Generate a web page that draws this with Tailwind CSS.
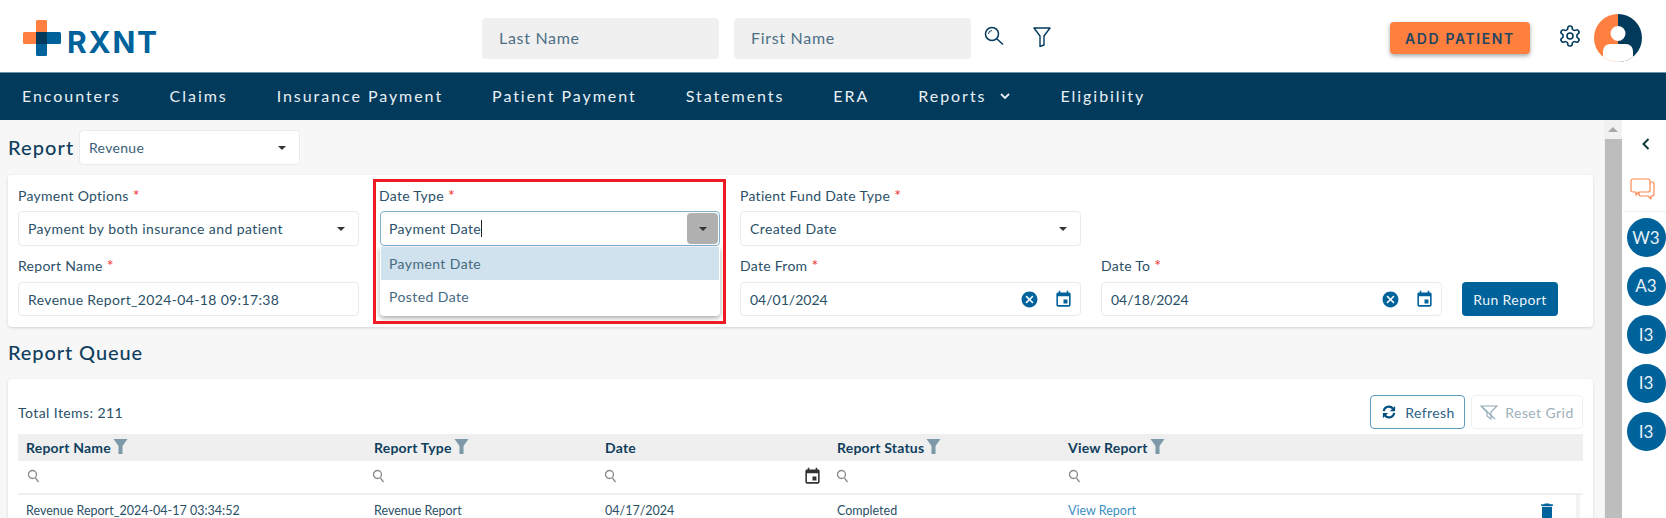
<!DOCTYPE html>
<html lang="en">
<head>
<meta charset="utf-8">
<title>RXNT Report</title>
<script src="https://cdn.jsdelivr.net/npm/@tailwindcss/browser@4"></script>
</head>
<body class="font-['Lato',sans-serif] text-[#2a5068] bg-white">
<div class="w-[1666px] h-[518px] overflow-hidden flex flex-col">
  <!-- header -->
  <header class="h-[72px] shrink-0 flex items-center bg-white relative">
    <div class="w-[482px] shrink-0 pl-[23px] flex items-center">
      <svg width="38" height="36" viewBox="0 0 38 36" class="mt-[3px]">
        <path d="M13 1.5a1.5 1.5 0 0 1 1.5-1.5h8a1.5 1.5 0 0 1 1.5 1.5V12H13v12H1.500a1.500 1.500 0 0 1-1.500-1.500v-9A1.500 1.500 0 0 1 1.500 12H13z" fill="#ff7f40"/>
        <path d="M13 12h23.500a1.500 1.500 0 0 1 1.500 1.500v9a1.500 1.500 0 0 1-1.500 1.500H24v10.500a1.500 1.500 0 0 1-1.500 1.500h-8a1.500 1.500 0 0 1-1.500-1.500z" fill="#00629b"/>
        <rect x="13" y="12" width="11" height="12" fill="#023a5c"/>
      </svg>
      <span class="ml-[6px] mt-[12px] text-[30px] leading-[30px] font-bold tracking-[1.8px] text-[#00629b] font-['Inter',sans-serif]">RXNT</span>
    </div>
    <div class="mt-[4px] w-[237px] h-[41px] rounded bg-[#f0f0f0] flex items-center pl-[17px] text-[16px] tracking-[0.7px] text-[#4d6f86]">Last Name</div>
    <div class="mt-[4px] w-[237px] h-[41px] rounded bg-[#f0f0f0] flex items-center pl-[17px] ml-[15px] text-[16px] tracking-[0.7px] text-[#4d6f86]">First Name</div>
    <svg class="ml-[13px]" width="20" height="20" viewBox="0 0 20 20" fill="none" stroke="#023a5c" stroke-width="1.500"><circle cx="8" cy="8" r="6.500"/><path d="M13 13l6 5.500"/><path d="M4.500 8a3.500 3.500 0 0 1 3.500-3.500" stroke-width="1"/></svg>
    <svg class="ml-[29px] mt-[2px]" width="18" height="20" viewBox="0 0 18 20" fill="none" stroke="#023a5c" stroke-width="1.400" stroke-linejoin="round"><path d="M1 1h16l-6 8v9l-4 1.500V9z"/></svg>
    <div class="mt-[4px] ml-[339px] w-[140px] h-[32px] rounded bg-[#ff7f3f] shadow-[0_2px_4px_rgba(0,0,0,0.35)] flex items-center justify-center text-[14px] font-semibold tracking-[1.6px] text-[#1e4562] font-['Inter',sans-serif]">ADD PATIENT</div>
    <svg class="ml-[28px]" width="24" height="24" viewBox="0 0 24 24" fill="none" stroke="#023a5c" stroke-width="1.600" stroke-linecap="round" stroke-linejoin="round"><path d="M12.220 2h-.44a2 2 0 0 0-2 2v.18a2 2 0 0 1-1 1.730l-.43.25a2 2 0 0 1-2 0l-.15-.08a2 2 0 0 0-2.730.73l-.22.38a2 2 0 0 0 .73 2.730l.15.1a2 2 0 0 1 1 1.720v.51a2 2 0 0 1-1 1.740l-.15.09a2 2 0 0 0-.73 2.730l.22.38a2 2 0 0 0 2.730.73l.15-.08a2 2 0 0 1 2 0l.43.25a2 2 0 0 1 1 1.730V20a2 2 0 0 0 2 2h.44a2 2 0 0 0 2-2v-.18a2 2 0 0 1 1-1.730l.43-.25a2 2 0 0 1 2 0l.15.08a2 2 0 0 0 2.730-.73l.22-.39a2 2 0 0 0-.73-2.730l-.15-.08a2 2 0 0 1-1-1.740v-.5a2 2 0 0 1 1-1.740l.15-.09a2 2 0 0 0 .73-2.730l-.22-.38a2 2 0 0 0-2.730-.73l-.15.08a2 2 0 0 1-2 0l-.43-.25a2 2 0 0 1-1-1.730V4a2 2 0 0 0-2-2z"/><circle cx="12" cy="12" r="3"/></svg>
    <svg class="mt-[4px] ml-[12px]" width="48" height="48" viewBox="0 0 48 48">
      <defs><clipPath id="av"><circle cx="24" cy="24" r="24"/></clipPath></defs>
      <g clip-path="url(#av)">
        <rect width="24" height="48" fill="#ff7f40"/><rect x="24" width="24" height="48" fill="#023a5c"/>
        <circle cx="24" cy="19.500" r="7.500" fill="#fff"/>
        <path d="M9 48V37a7 7 0 0 1 7-7h16a7 7 0 0 1 7 7v11z" fill="#fff"/>
      </g>
    </svg>
  </header>
  <!-- nav -->
  <nav class="h-[48px] pb-[2px] shrink-0 bg-[#023a5c] border-t border-[#6f93a8] flex items-center pl-[22px] gap-x-[49px] text-[16px] tracking-[1.95px] text-[#e9f0f4]">
    <span>Encounters</span><span>Claims</span><span>Insurance Payment</span><span>Patient Payment</span><span>Statements</span><span>ERA</span>
    <span class="flex items-center">Reports<svg class="ml-[13px]" width="12" height="8" viewBox="0 0 12 8" fill="none" stroke="#e9f0f4" stroke-width="1.800"><path d="M2 2l4 4 4-4"/></svg></span>
    <span>Eligibility</span>
  </nav>
  <!-- body -->
  <div class="flex-1 flex min-h-0">
    <main class="w-[1604px] shrink-0 bg-[#f7f7f7] pl-[8px] pr-[11px] overflow-hidden">
      <div class="flex items-center h-[35px] mt-[10px]">
        <span class="text-[20px] pb-[2px] font-medium text-[#0f3f5e] tracking-[1.1px] w-[71px]">Report</span>
        <div class="w-[221px] h-[35px] bg-white rounded border border-[#ebebeb] flex items-center justify-between pl-[9px] pr-[13px] text-[14px] tracking-[0.3px] text-[#3b6078]">Revenue<span class="w-0 h-0 border-x-[4px] border-x-transparent border-t-[4px] border-t-[#333]"></span></div>
      </div>
      <!-- form card -->
      <section class="mt-[10px] h-[152px] bg-white rounded shadow-[0_1px_3px_rgba(0,0,0,0.14)] pt-[11px] pl-[10px]">
        <div class="grid grid-cols-[341px_341px_341px_341px_96px] gap-x-[20px] text-[14px]">
          <!-- row 1 -->
          <div>
            <div class="h-[20px] pb-[2px] flex items-center tracking-[0.28px]">Payment Options<span class="text-[#f03030] ml-[4px] text-[16px]">*</span></div>
            <div class="mt-[5px] h-[35px] rounded border border-[#ebebeb] flex items-center justify-between pl-[9px] pr-[13px] tracking-[0.42px]">Payment by both insurance and patient<span class="w-0 h-0 border-x-[4px] border-x-transparent border-t-[4px] border-t-[#333]"></span></div>
          </div>
          <div class="relative">
            <div class="h-[20px] pb-[2px] flex items-center tracking-[0.28px]">Date Type<span class="text-[#f03030] ml-[4px] text-[16px]">*</span></div>
            <div class="ml-[1px] mt-[5px] h-[35px] rounded border border-[#7fb2d0] flex items-center justify-between pl-[8px] pr-[1px] tracking-[0.42px]"><span class="flex items-center">Payment Date<span class="w-px h-[17px] bg-[#222]"></span></span><span class="w-[31px] h-[31px] bg-[#b0b0b0] rounded-sm flex items-center justify-center"><span class="w-0 h-0 border-x-[4px] border-x-transparent border-t-[4px] border-t-[#333]"></span></span></div>
            <!-- dropdown -->
            <div class="absolute left-[1px] top-[61px] w-[340px] h-[69px] bg-white rounded-b shadow-[0_2px_5px_rgba(0,0,0,0.35)] z-10 text-[#46697f] tracking-[0.42px]">
              <div class="h-[33px] bg-[#cfe2ed] flex items-center pl-[8px] ml-[1px] mr-[1px]">Payment Date</div>
              <div class="h-[36px] pb-[3px] flex items-center pl-[9px]">Posted Date</div>
            </div>
            <div class="absolute left-[-6px] top-[-7px] w-[353px] h-[145px] border-[3px] border-[#ed1c24] z-20 pointer-events-none"></div>
          </div>
          <div>
            <div class="h-[20px] pb-[2px] flex items-center tracking-[0.28px]">Patient Fund Date Type<span class="text-[#f03030] ml-[4px] text-[16px]">*</span></div>
            <div class="mt-[5px] h-[35px] rounded border border-[#ebebeb] flex items-center justify-between pl-[9px] pr-[13px] tracking-[0.42px]">Created Date<span class="w-0 h-0 border-x-[4px] border-x-transparent border-t-[4px] border-t-[#333]"></span></div>
          </div>
          <div></div><div></div>
          <!-- row 2 -->
          <div class="mt-[10px]">
            <div class="h-[20px] pb-[2px] flex items-center tracking-[0.28px]">Report Name<span class="text-[#f03030] ml-[4px] text-[16px]">*</span></div>
            <div class="mt-[6px] h-[34px] rounded border border-[#ebebeb] flex items-center pl-[9px] tracking-[0.35px]">Revenue Report_2024-04-18 09:17:38</div>
          </div>
          <div></div>
          <div class="mt-[10px]">
            <div class="h-[20px] pb-[2px] flex items-center tracking-[0.28px]">Date From<span class="text-[#f03030] ml-[4px] text-[16px]">*</span></div>
            <div class="mt-[6px] h-[34px] rounded border border-[#ebebeb] flex items-center justify-between pl-[9px] pr-[7px]">04/01/2024
              <span class="flex items-center gap-x-[15px]">
                <svg width="19" height="19" viewBox="0 0 24 24" fill="#00629b"><path d="M12 2C6.470 2 2 6.470 2 12s4.470 10 10 10 10-4.470 10-10S17.530 2 12 2zm5 13.590L15.590 17 12 13.410 8.410 17 7 15.590 10.590 12 7 8.410 8.410 7 12 10.590 15.590 7 17 8.410 13.410 12 17 15.590z"/></svg>
                <svg width="19" height="19" viewBox="0 0 24 24" fill="#00629b"><path d="M17 12h-5v5h5v-5zM16 1v2H8V1H6v2H5c-1.110 0-1.990.9-1.990 2L3 19c0 1.100.89 2 2 2h14c1.100 0 2-.9 2-2V5c0-1.100-.9-2-2-2h-1V1h-2zm3 18H5V8h14v11z"/></svg>
              </span>
            </div>
          </div>
          <div class="mt-[10px]">
            <div class="h-[20px] pb-[2px] flex items-center tracking-[0.28px]">Date To<span class="text-[#f03030] ml-[4px] text-[16px]">*</span></div>
            <div class="mt-[6px] h-[34px] rounded border border-[#ebebeb] flex items-center justify-between pl-[9px] pr-[7px]">04/18/2024
              <span class="flex items-center gap-x-[15px]">
                <svg width="19" height="19" viewBox="0 0 24 24" fill="#00629b"><path d="M12 2C6.470 2 2 6.470 2 12s4.470 10 10 10 10-4.470 10-10S17.530 2 12 2zm5 13.590L15.590 17 12 13.410 8.410 17 7 15.590 10.590 12 7 8.410 8.410 7 12 10.590 15.590 7 17 8.410 13.410 12 17 15.590z"/></svg>
                <svg width="19" height="19" viewBox="0 0 24 24" fill="#00629b"><path d="M17 12h-5v5h5v-5zM16 1v2H8V1H6v2H5c-1.110 0-1.990.9-1.990 2L3 19c0 1.100.89 2 2 2h14c1.100 0 2-.9 2-2V5c0-1.100-.9-2-2-2h-1V1h-2zm3 18H5V8h14v11z"/></svg>
              </span>
            </div>
          </div>
          <div class="mt-[36px] h-[34px] rounded bg-[#00629b] text-[#eef5f9] flex items-center justify-center tracking-[0.42px]">Run Report</div>
        </div>
      </section>
      <h2 class="h-[52px] pb-[3px] flex items-center text-[20px] font-medium tracking-[0.9px] text-[#0f3f5e]">Report Queue</h2>
      <!-- queue card -->
      <section class="h-[140px] bg-white rounded-t shadow-[0_1px_3px_rgba(0,0,0,0.14)] pt-[16px] px-[10px] text-[14px]">
        <div class="flex items-center h-[34px]">
          <span class="tracking-[0.42px] flex-1">Total Items: 211</span>
          <div class="w-[95px] h-[34px] rounded border border-[#5f9cc0] flex items-center justify-center gap-x-[9px] pl-[2px] text-[#2c6286] tracking-[0.42px]">
            <svg width="14" height="14" viewBox="0 0 16 16" fill="none" stroke="#00507f" stroke-width="2.400"><path d="M2 7a6 6 0 0 1 10.500-3"/><path d="M14 9a6 6 0 0 1-10.500 3"/><path d="M15 1v6H9zM1 15V9h6z" stroke="none" fill="#00507f"/></svg>Refresh</div>
          <div class="ml-[6px] w-[112px] h-[34px] rounded border border-[#efefef] flex items-center justify-center gap-x-[7px] text-[#9db0bc] tracking-[0.42px]">
            <svg width="18" height="15" viewBox="0 0 18 15" fill="none" stroke="#8fa8b8" stroke-width="1.100"><path d="M1 1h16l-6 6v7l-4-3V7z"/><path d="M2 2l13 12"/></svg>Reset Grid</div>
        </div>
        <div class="mt-[5px] grid grid-cols-[348px_231px_232px_231px_523px]">
          <div class="h-[27px] bg-[#efefef] flex items-center pl-[8px] font-bold text-[#0f3f5e] tracking-[0.2px]">Report Name<svg class="ml-[2px] -mt-[3px]" width="15" height="15" viewBox="0 0 14 15" fill="#7d98a8"><path d="M0 0h14L9 7v8H5V7z"/></svg></div>
          <div class="h-[27px] bg-[#efefef] flex items-center pl-[8px] font-bold text-[#0f3f5e] tracking-[0.2px]">Report Type<svg class="ml-[2px] -mt-[3px]" width="15" height="15" viewBox="0 0 14 15" fill="#7d98a8"><path d="M0 0h14L9 7v8H5V7z"/></svg></div>
          <div class="h-[27px] bg-[#efefef] flex items-center pl-[8px] font-bold text-[#0f3f5e] tracking-[0.2px]">Date</div>
          <div class="h-[27px] bg-[#efefef] flex items-center pl-[8px] font-bold text-[#0f3f5e] tracking-[0.2px]">Report Status<svg class="ml-[2px] -mt-[3px]" width="15" height="15" viewBox="0 0 14 15" fill="#7d98a8"><path d="M0 0h14L9 7v8H5V7z"/></svg></div>
          <div class="h-[27px] bg-[#efefef] flex items-center pl-[8px] font-bold text-[#0f3f5e] tracking-[0.2px]">View Report<svg class="ml-[2px] -mt-[3px]" width="15" height="15" viewBox="0 0 14 15" fill="#7d98a8"><path d="M0 0h14L9 7v8H5V7z"/></svg></div>

          <div class="h-[34px] pb-[2px] border-b-2 border-[#f0f0f0] flex items-center pl-[9px]"><svg width="13" height="14" viewBox="0 0 13 14" fill="none" stroke="#8a8a8a" stroke-width="1.300"><circle cx="5.500" cy="5.500" r="4"/><path d="M8.500 9l3 4"/></svg></div>
          <div class="h-[34px] pb-[2px] border-b-2 border-[#f0f0f0] flex items-center pl-[6px]"><svg width="13" height="14" viewBox="0 0 13 14" fill="none" stroke="#8a8a8a" stroke-width="1.300"><circle cx="5.500" cy="5.500" r="4"/><path d="M8.500 9l3 4"/></svg></div>
          <div class="h-[34px] pb-[2px] border-b-2 border-[#f0f0f0] flex items-center justify-between pl-[7px] pr-[7px]"><svg width="13" height="14" viewBox="0 0 13 14" fill="none" stroke="#8a8a8a" stroke-width="1.300"><circle cx="5.500" cy="5.500" r="4"/><path d="M8.500 9l3 4"/></svg><svg width="19" height="19" viewBox="0 0 24 24" fill="#333"><path d="M17 12h-5v5h5v-5zM16 1v2H8V1H6v2H5c-1.110 0-1.990.9-1.990 2L3 19c0 1.100.89 2 2 2h14c1.100 0 2-.9 2-2V5c0-1.100-.9-2-2-2h-1V1h-2zm3 18H5V8h14v11z"/></svg></div>
          <div class="h-[34px] pb-[2px] border-b-2 border-[#f0f0f0] flex items-center pl-[7px]"><svg width="13" height="14" viewBox="0 0 13 14" fill="none" stroke="#8a8a8a" stroke-width="1.300"><circle cx="5.500" cy="5.500" r="4"/><path d="M8.500 9l3 4"/></svg></div>
          <div class="h-[34px] pb-[2px] border-b-2 border-[#f0f0f0] flex items-center pl-[8px]"><svg width="13" height="14" viewBox="0 0 13 14" fill="none" stroke="#8a8a8a" stroke-width="1.300"><circle cx="5.500" cy="5.500" r="4"/><path d="M8.500 9l3 4"/></svg></div>

          <div class="h-[32px] flex items-center pl-[8px] text-[12.500px] leading-[16px]">Revenue Report_2024-04-17 03:34:52</div>
          <div class="h-[32px] flex items-center pl-[8px] text-[12.500px] leading-[16px]">Revenue Report</div>
          <div class="h-[32px] flex items-center pl-[8px] text-[12.500px] leading-[16px]">04/17/2024</div>
          <div class="h-[32px] flex items-center pl-[8px] text-[12.500px] leading-[16px]">Completed</div>
          <div class="h-[32px] flex items-center justify-between pl-[8px] text-[12.500px] leading-[16px] text-[#3c8fc4]">View Report
            <span class="flex items-center h-[32px]">
              <svg class="mr-[19px]" width="20" height="20" viewBox="0 0 24 24" fill="#00629b"><path d="M6 19c0 1.100.9 2 2 2h8c1.100 0 2-.9 2-2V7H6v12zM19 4h-3.500l-1-1h-5l-1 1H5v2h14V4z"/></svg>
              <span class="w-[4px] h-[32px] bg-[#f3f3f3] mr-[3px]"></span>
            </span>
          </div>
        </div>
      </section>
    </main>
    <!-- page scrollbar -->
    <div class="w-[18px] shrink-0 bg-[#f1f1f1] flex flex-col items-center">
      <span class="mt-[7px] w-0 h-0 border-x-[5px] border-x-transparent border-b-[5px] border-b-[#a8a8a8]"></span>
      <div class="mt-[7px] flex-1 w-[17px] bg-[#bdbdbd]"></div>
    </div>
    <!-- right rail -->
    <aside class="flex-1 bg-white pl-[4px] flex flex-col items-center">
      <svg class="mt-[17px]" width="12" height="14" viewBox="0 0 12 14" fill="none" stroke="#0b3d3a" stroke-width="2"><path d="M8.500 2L3.500 7l5 5"/></svg>
      <svg class="mt-[27px] -ml-[8px]" width="25" height="23" viewBox="0 0 25 23" fill="none" stroke="#ff8a50" stroke-width="1.200" stroke-linejoin="round"><path d="M3 1h15a2 2 0 0 1 2 2v9a2 2 0 0 1-2 2H9l-3 3v-3H3a2 2 0 0 1-2-2V3a2 2 0 0 1 2-2z"/><path d="M20 4h2a2 2 0 0 1 2 2v10a2 2 0 0 1-2 2h-1v3l-3-3h-7a2 2 0 0 1-2-2v-2"/></svg>
      <div class="mt-[10px] -ml-[4px] w-[43px] border-t border-[#eeeeee]"></div>
      <div class="mt-[6px] flex flex-col gap-y-[9.500px] text-[17px] text-[#e8f1f6]">
        <div class="w-[39px] h-[39px] rounded-full bg-[#00629b] flex items-center justify-center">W3</div>
        <div class="w-[39px] h-[39px] rounded-full bg-[#00629b] flex items-center justify-center">A3</div>
        <div class="w-[39px] h-[39px] rounded-full bg-[#00629b] flex items-center justify-center">I3</div>
        <div class="w-[39px] h-[39px] rounded-full bg-[#00629b] flex items-center justify-center">I3</div>
        <div class="w-[39px] h-[39px] rounded-full bg-[#00629b] flex items-center justify-center">I3</div>
      </div>
    </aside>
  </div>
</div>
</body>
</html>
